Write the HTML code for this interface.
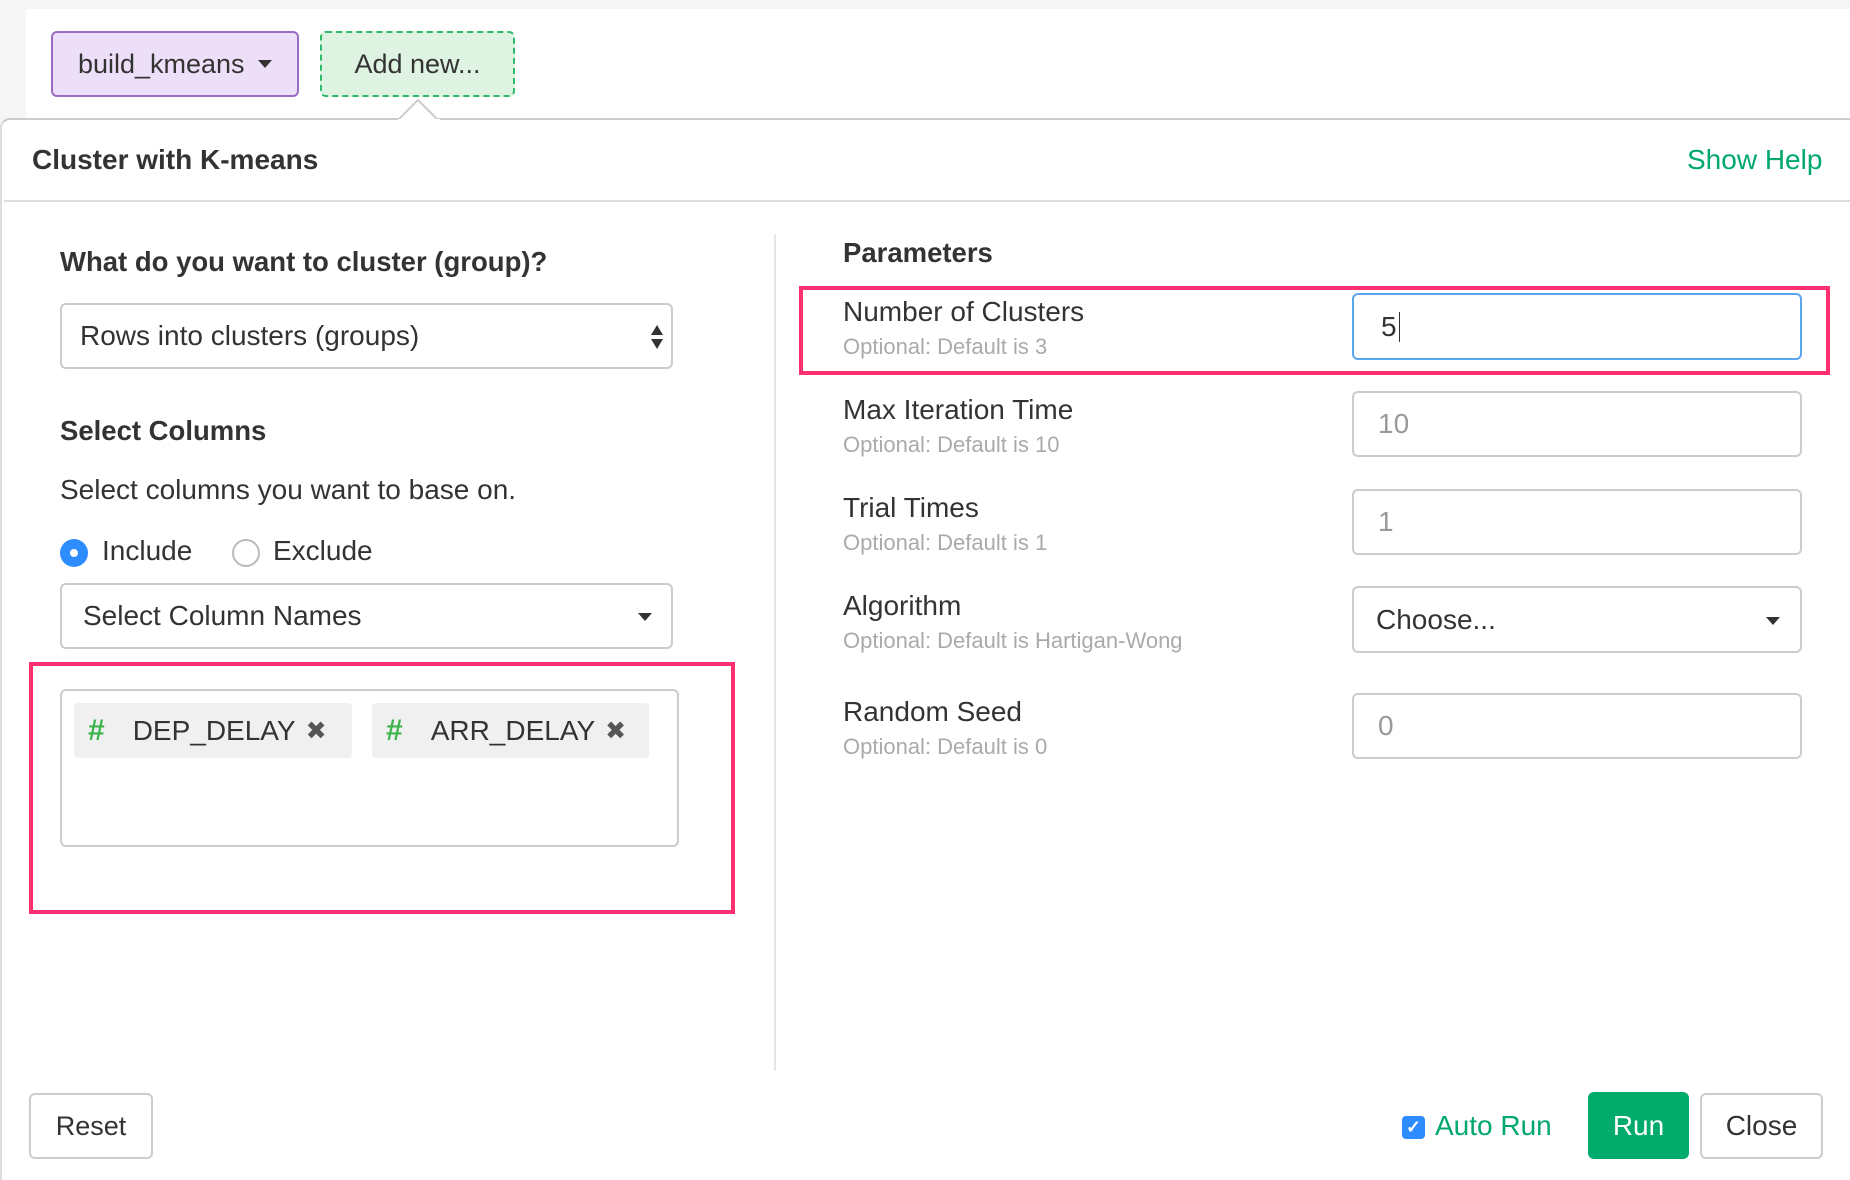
<!DOCTYPE html>
<html><head><meta charset="utf-8"><style>
*{box-sizing:border-box;margin:0;padding:0}
body{width:1850px;height:1180px;background:#f6f6f6;font-family:"Liberation Sans",sans-serif;color:#333;position:relative;overflow:hidden}
.a{position:absolute}
.top{left:26px;top:9px;width:1824px;height:180px;background:#fff}
.btn{position:absolute;border-radius:6px;font-size:27px;display:flex;align-items:center;justify-content:center}
.panel{left:0;top:118px;width:1850px;height:1062px;background:#fff;border-top:2px solid #ccc;border-left:2px solid #ddd;border-radius:10px 0 0 0}
.inp{position:absolute;border:2px solid #ccc;border-radius:6px;background:#fff;font-size:28px;display:flex;align-items:center;padding-left:24px;color:#999}
.lbl{position:absolute;left:843px;font-size:28px;color:#333}
.sub{position:absolute;left:843px;font-size:22px;color:#aaa}
.h{position:absolute;font-weight:bold;font-size:27.5px;color:#333}
.pink{position:absolute;border:4px solid #ff3070}
.tag{position:absolute;background:#f0f0f0;border-radius:4px;font-size:28px;display:flex;align-items:center;color:#333}
.tag b{color:#3cb44b;font-size:30px;margin:0 28px 0 14px}
.tag i{font-style:normal;color:#555;margin-left:10px;font-size:25px}
.car{position:absolute;width:0;height:0;border-left:7px solid transparent;border-right:7px solid transparent;border-top:8px solid #333}
</style></head><body>
<div class="a top"></div>
<div class="btn" style="left:51px;top:31px;width:248px;height:66px;background:#ecdff7;border:2px solid #9b6bc3">build_kmeans&nbsp;<span style="display:inline-block;width:0;height:0;border-left:7px solid transparent;border-right:7px solid transparent;border-top:8px solid #333;margin-left:6px"></span></div>
<div class="btn" style="left:320px;top:31px;width:195px;height:66px;background:#dff3e2;border:2px dashed #2fba6b">Add new...</div>
<div class="a panel"></div>
<svg class="a" style="left:398px;top:98px" width="42" height="24"><path d="M0 22 L20 2 L40 22" fill="#fff" stroke="#ccc" stroke-width="2"/><rect x="0" y="21" width="42" height="3" fill="#fff"/></svg>
<div class="h" style="left:32px;top:144px;font-size:28px">Cluster with K-means</div>
<div class="a" style="left:1687px;top:144px;font-size:28px;color:#00a86b">Show Help</div>
<div class="a" style="left:4px;top:200px;width:1846px;height:2px;background:#ddd"></div>

<div class="h" style="left:60px;top:246px">What do you want to cluster (group)?</div>
<div class="inp" style="left:60px;top:303px;width:613px;height:66px;color:#333;padding-left:18px">Rows into clusters (groups)</div>
<svg class="a" style="left:650px;top:323px" width="14" height="28"><path d="M1 12 L7 2 L13 12Z M1 16 L7 26 L13 16Z" fill="#333"/></svg>
<div class="h" style="left:60px;top:415px">Select Columns</div>
<div class="a" style="left:60px;top:474px;font-size:28px">Select columns you want to base on.</div>
<div class="a" style="left:60px;top:539px;width:28px;height:28px;border-radius:50%;background:#2d8cff"><div style="position:absolute;left:10px;top:10px;width:8px;height:8px;border-radius:50%;background:#fff"></div></div>
<div class="a" style="left:102px;top:535px;font-size:28px">Include</div>
<div class="a" style="left:232px;top:539px;width:28px;height:28px;border-radius:50%;border:2px solid #bbb"></div>
<div class="a" style="left:273px;top:535px;font-size:28px">Exclude</div>
<div class="inp" style="left:60px;top:583px;width:613px;height:66px;color:#333;padding-left:21px">Select Column Names</div>
<div class="car" style="left:638px;top:613px"></div>
<div class="pink" style="left:29px;top:662px;width:706px;height:252px"></div>
<div class="inp" style="left:60px;top:689px;width:619px;height:158px"></div>
<div class="tag" style="left:74px;top:703px;width:278px;height:55px"><b>#</b>DEP_DELAY<i>✖</i></div>
<div class="tag" style="left:372px;top:703px;width:277px;height:55px"><b>#</b>ARR_DELAY<i>✖</i></div>

<div class="a" style="left:774px;top:234px;width:2px;height:837px;background:#e6e6e6"></div>
<div class="h" style="left:843px;top:237px">Parameters</div>
<div class="pink" style="left:799px;top:286px;width:1031px;height:89px"></div>
<div class="lbl" style="top:296px">Number of Clusters</div><div class="sub" style="top:334px">Optional: Default is 3</div>
<div class="inp" style="left:1352px;top:293px;width:450px;height:67px;border-color:#5aa6ee;color:#333;padding-left:27px">5<span style="display:inline-block;width:1px;height:30px;background:#333;margin-left:2px"></span></div>
<div class="lbl" style="top:394px">Max Iteration Time</div><div class="sub" style="top:432px">Optional: Default is 10</div>
<div class="inp" style="left:1352px;top:391px;width:450px;height:66px">10</div>
<div class="lbl" style="top:492px">Trial Times</div><div class="sub" style="top:530px">Optional: Default is 1</div>
<div class="inp" style="left:1352px;top:489px;width:450px;height:66px">1</div>
<div class="lbl" style="top:590px">Algorithm</div><div class="sub" style="top:628px">Optional: Default is Hartigan-Wong</div>
<div class="inp" style="left:1352px;top:586px;width:450px;height:67px;color:#333;padding-left:22px">Choose...</div>
<div class="car" style="left:1766px;top:617px"></div>
<div class="lbl" style="top:696px">Random Seed</div><div class="sub" style="top:734px">Optional: Default is 0</div>
<div class="inp" style="left:1352px;top:693px;width:450px;height:66px">0</div>

<div class="btn" style="left:29px;top:1093px;width:124px;height:66px;border:2px solid #ccc;color:#333">Reset</div>
<div class="a" style="left:1402px;top:1116px;width:23px;height:23px;border-radius:4px;background:#2d8cff;color:#fff;font-size:18px;line-height:23px;text-align:center;font-weight:bold">✓</div>
<div class="a" style="left:1435px;top:1110px;font-size:28px;color:#00a86b">Auto Run</div>
<div class="btn" style="left:1588px;top:1092px;width:101px;height:67px;background:#00ab6b;color:#fff;font-size:28px">Run</div>
<div class="btn" style="left:1700px;top:1093px;width:123px;height:66px;border:2px solid #ccc;color:#333;font-size:28px">Close</div>
</body></html>
